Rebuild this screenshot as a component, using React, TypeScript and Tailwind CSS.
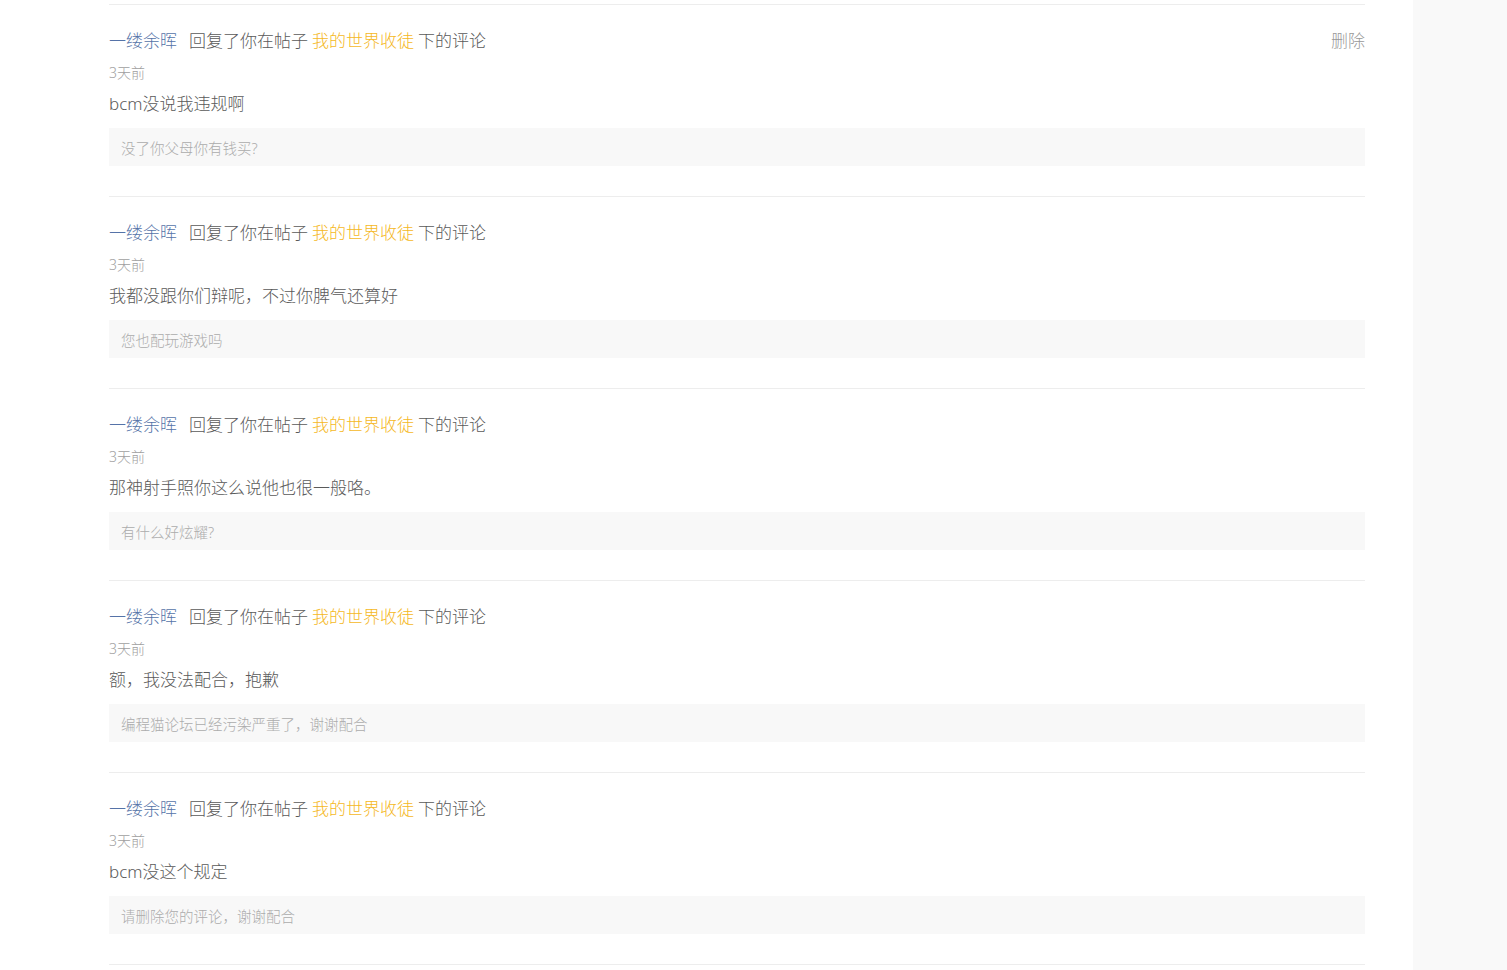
const replies = [
    { content: "bcm没说我违规啊", quote: "没了你父母你有钱买?", canDelete: true },
    { content: "我都没跟你们辩呢，不过你脾气还算好", quote: "您也配玩游戏吗" },
    { content: "那神射手照你这么说他也很一般咯。", quote: "有什么好炫耀?" },
    { content: "额，我没法配合，抱歉", quote: "编程猫论坛已经污染严重了，谢谢配合" },
    { content: "bcm没这个规定", quote: "请删除您的评论，谢谢配合" },
];

const font = { fontFamily: '"Noto Sans", "Noto Sans CJK SC", sans-serif' };

const App = () => {
    return (
        <div className="flex min-h-[970px] bg-white font-light" style={font}>
            <main className="flex-1 pl-[109px] pr-[48px] pt-[4px]">
                {replies.map((r, i) => (
                    <div key={i} className="border-t border-[#ededed] pt-6 pb-[30px]">
                        <div className="flex items-center justify-between text-[17px] leading-6">
                            <div className="text-[#5a5a5a]">
                                <span className="text-[#5573a8] mr-3">一缕余晖</span>
                                <span>回复了你在帖子</span>
                                <span className="text-[#f5b81e] mx-1">我的世界收徒</span>
                                <span>下的评论</span>
                            </div>
                            {r.canDelete && <button className="text-[#999] cursor-pointer">删除</button>}
                        </div>
                        <div className="mt-[10px] text-[14px] leading-5 text-[#a0a0a0]">3天前</div>
                        <div className="mt-[9px] text-[17px] leading-6 text-[#5a5a5a]">{r.content}</div>
                        <div className="mt-3 h-[38px] flex items-center px-3 pt-[3px] bg-[#f8f8f8] text-[14.5px] text-[#acacac]">
                            {r.quote}
                        </div>
                    </div>
                ))}
                <div className="border-t border-[#ededed]" />
            </main>
            <aside className="w-[94px] bg-[#f9f9f9]" />
        </div>
    );
};

export default App;
